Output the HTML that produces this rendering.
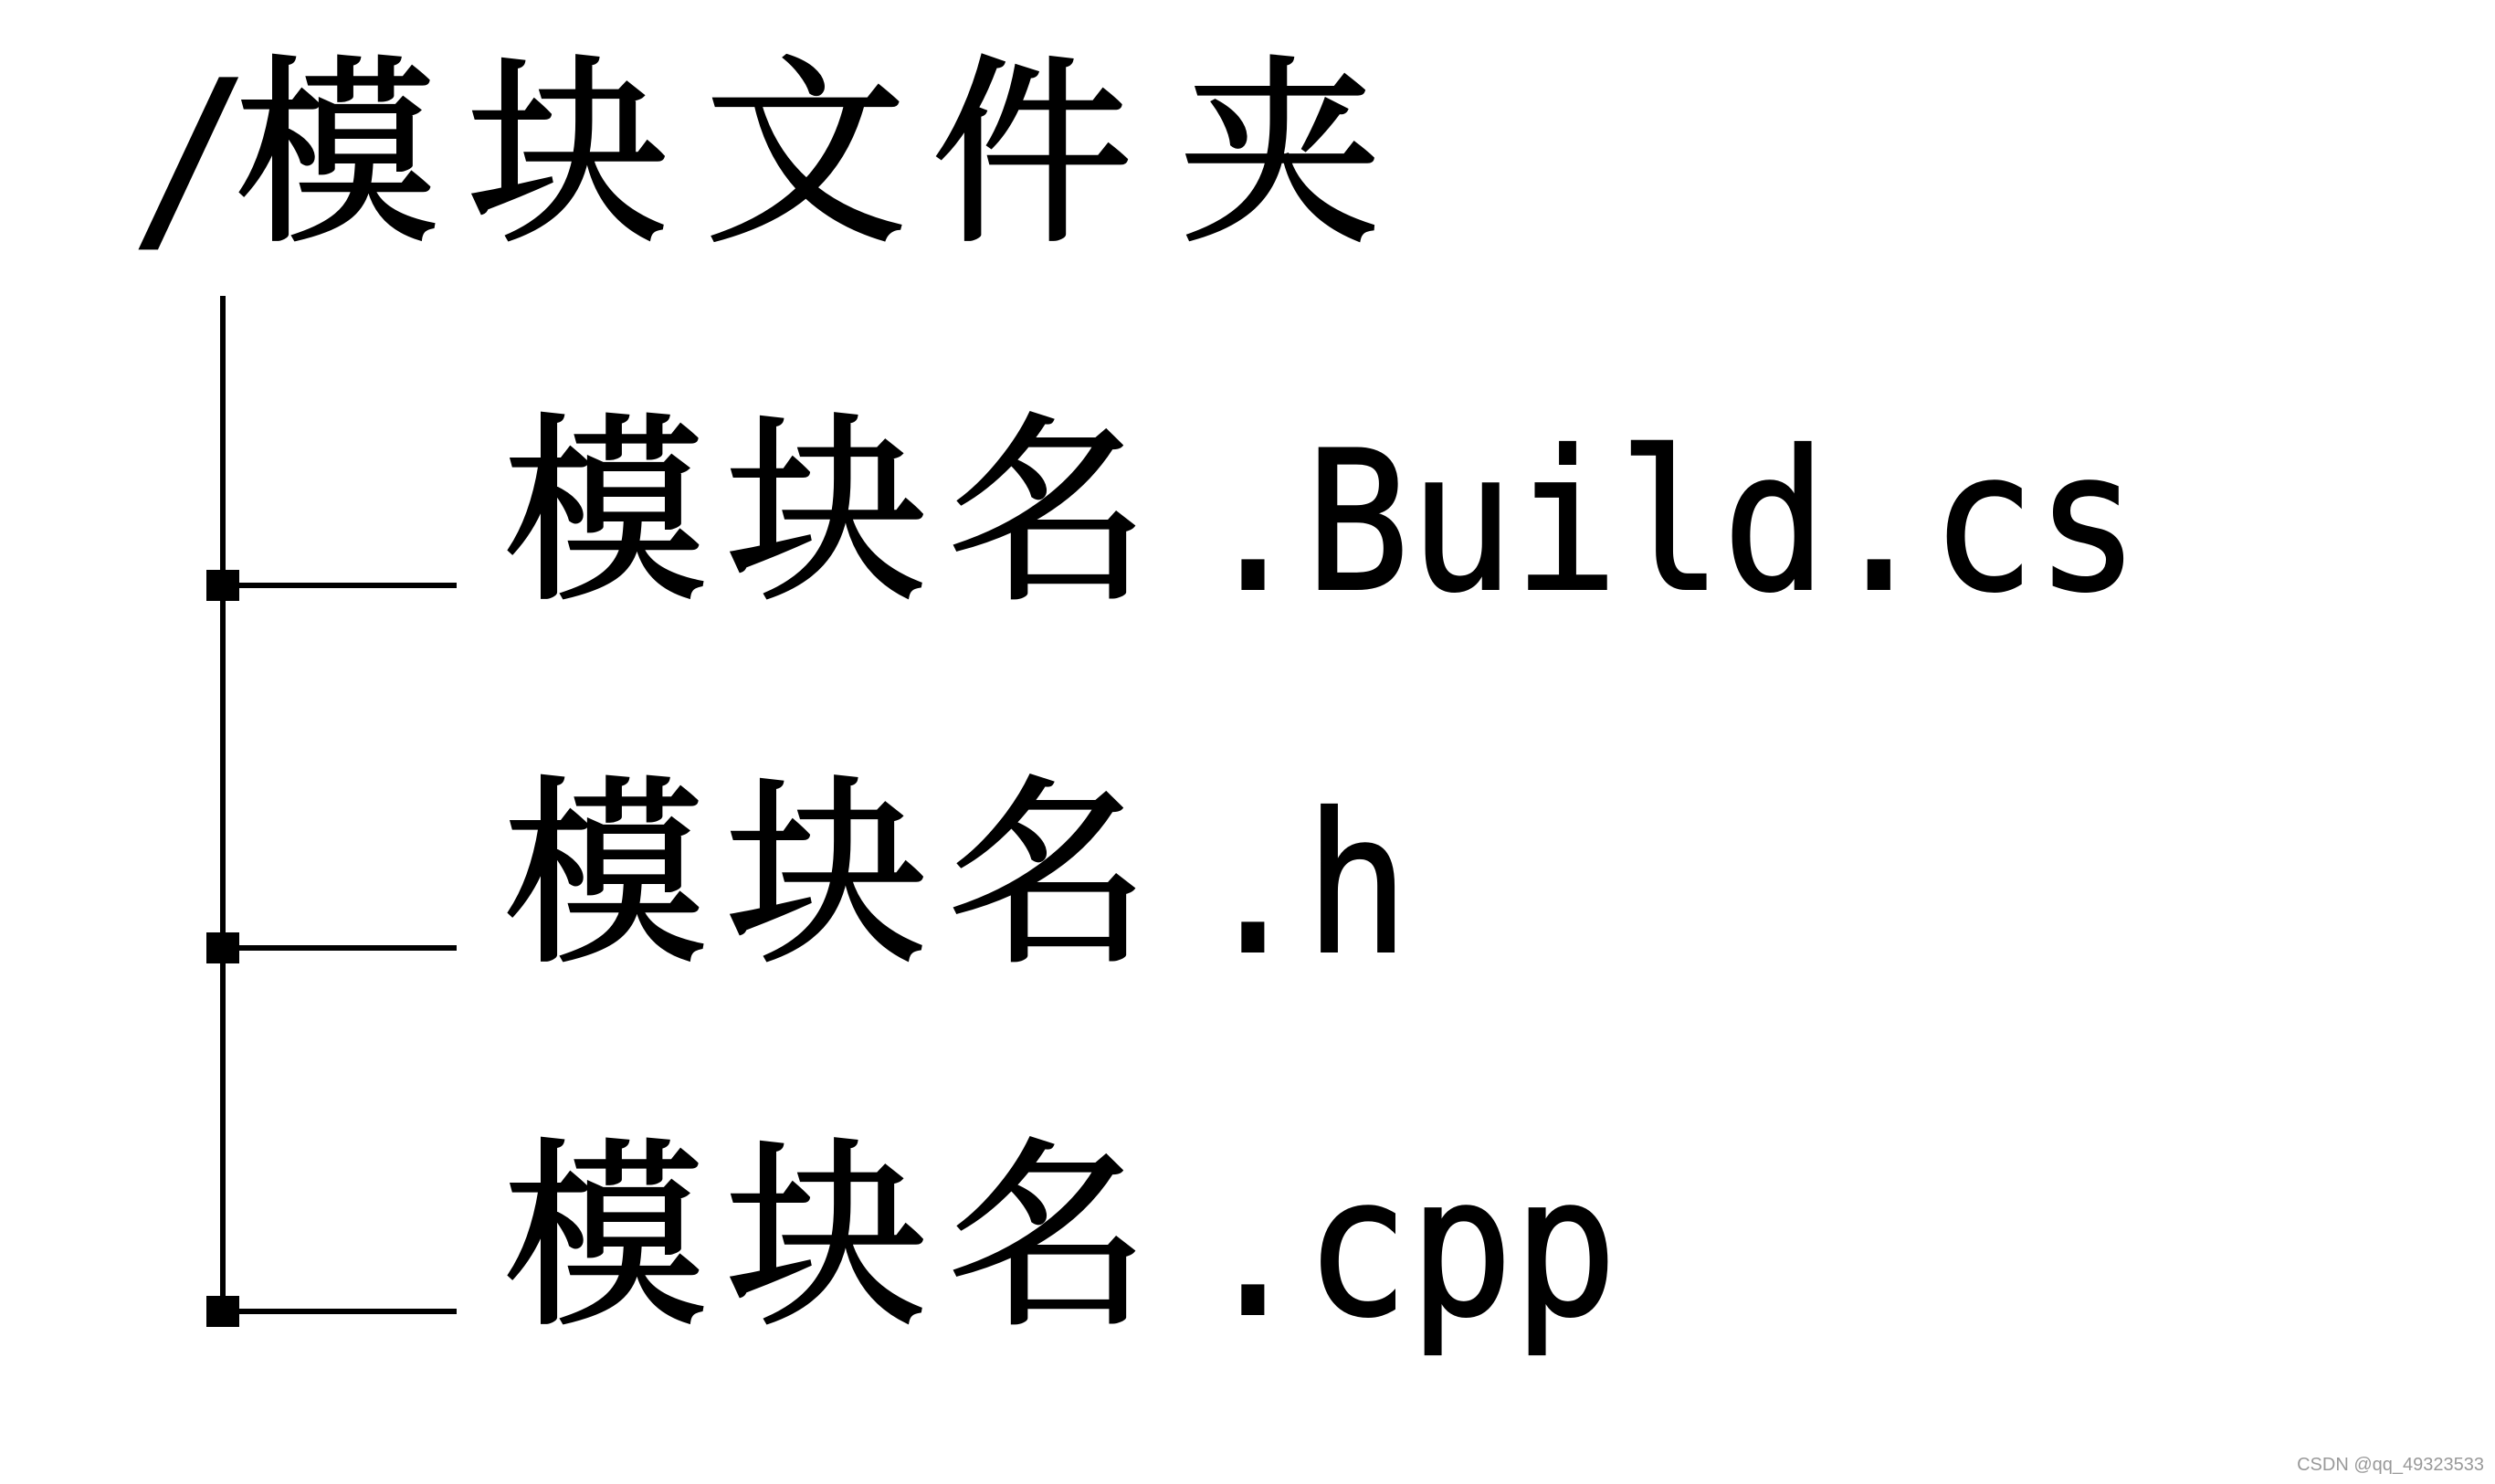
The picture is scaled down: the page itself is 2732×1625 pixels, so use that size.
<!DOCTYPE html>
<html><head><meta charset="utf-8"><style>html,body{margin:0;padding:0;background:#fff;}svg{display:block}</style></head>
<body>
<svg width="2732" height="1625" viewBox="0 0 2732 1625" xmlns="http://www.w3.org/2000/svg">
<rect width="2732" height="1625" fill="#fff"/>
<g fill="#000" stroke="#000" stroke-width="4" font-family="'Noto Serif CJK SC','AR PL UKai CN',serif" font-size="220">
<text x="258" y="245">模</text><text x="512" y="245">块</text><text x="772" y="245">文</text><text x="1020" y="245">件</text><text x="1292" y="245">夹</text>
<text x="552" y="637">模</text><text x="795" y="637">块</text><text x="1038" y="637">名</text>
<text x="552" y="1034">模</text><text x="795" y="1034">块</text><text x="1038" y="1034">名</text>
<text x="552" y="1431">模</text><text x="795" y="1431">块</text><text x="1038" y="1431">名</text>
</g>
<text x="140" y="252" fill="#000" font-family="'DejaVu Sans Mono','Liberation Mono',monospace" font-size="230">/</text>
<g fill="#000" stroke="#000" stroke-width="2" font-family="'DejaVu Sans Mono','Liberation Mono',monospace" font-size="212">
<text x="1315" y="645" textLength="1028" lengthAdjust="spacingAndGlyphs">.Build.cs</text>
<text x="1315" y="1042" textLength="228" lengthAdjust="spacingAndGlyphs">.h</text>
<text x="1315" y="1439" textLength="456" lengthAdjust="spacingAndGlyphs">.cpp</text>
</g>
<g stroke="#000" stroke-width="6">
<line x1="244" y1="324" x2="244" y2="1448"/>
<line x1="244" y1="641" x2="500" y2="641"/>
<line x1="244" y1="1038" x2="500" y2="1038"/>
<line x1="244" y1="1436" x2="500" y2="1436"/>
</g>
<g fill="#000">
<rect x="226" y="624" width="36" height="34"/>
<rect x="226" y="1021" width="36" height="34"/>
<rect x="226" y="1419" width="36" height="34"/>
</g>
<text x="2720" y="1610" text-anchor="end" font-family="'Liberation Sans',sans-serif" font-size="20" fill="#999">CSDN @qq_49323533</text>
</svg>
</body></html>
